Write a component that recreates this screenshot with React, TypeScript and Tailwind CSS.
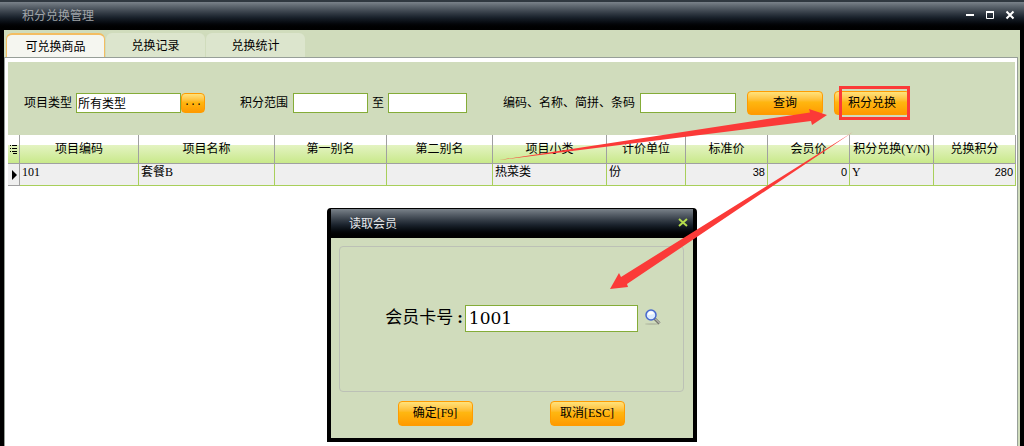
import type { ReactNode } from 'react'

const tabs = ['可兑换商品', '兑换记录', '兑换统计']

const columns = [
  { title: '项目编码', width: 'w-[119px]', value: '101' },
  { title: '项目名称', width: 'w-[136px]', value: '套餐B' },
  { title: '第一别名', width: 'w-[112px]', value: '' },
  { title: '第二别名', width: 'w-[106px]', value: '' },
  { title: '项目小类', width: 'w-[114px]', value: '热菜类' },
  { title: '计价单位', width: 'w-[79px]', value: '份' },
  { title: '标准价', width: 'w-[82px]', value: '38', numeric: true },
  { title: '会员价', width: 'w-[82px]', value: '0', numeric: true },
  { title: '积分兑换(Y/N)', width: 'w-[84px]', value: 'Y' },
  { title: '兑换积分', width: 'w-[82px]', value: '280', numeric: true }
]

const titleBar = 'flex items-center bg-linear-to-b from-[#7a828a] via-[#1a222c] via-55% to-black'
const field = 'h-5 border border-[#84ac38] bg-white px-px outline-none'
const headCell = 'border-r border-b border-[#a0a0a0] bg-linear-to-b from-white from-[10px] via-[#e4f3c2] via-[10px] to-[#c9e98a] p-0'

function OrangeButton({ children, className, label }: { children: ReactNode; className: string; label?: string }) {
  return (
    <button
      type="button"
      aria-label={label}
      className={`rounded border border-[#ff9c00] bg-linear-to-b from-[#ffe27a] via-[#ffb710] via-45% to-[#ff9a00] text-center leading-none ${className}`}
    >
      {children}
    </button>
  )
}

function WindowButtons() {
  return (
    <div className="ml-auto flex items-center gap-2 pr-2 pb-1 text-white">
      <button type="button" aria-label="最小化">
        <svg className="size-3" viewBox="0 0 12 12" stroke="currentColor" strokeWidth="2">
          <path d="M2 7h8" />
        </svg>
      </button>
      <button type="button" aria-label="最大化">
        <svg className="size-3" viewBox="0 0 12 12" fill="none" stroke="currentColor">
          <path d="M2.5 3v7.5h7V3" />
          <path d="M2 4h8" strokeWidth="2" />
        </svg>
      </button>
      <button type="button" aria-label="关闭">
        <svg className="size-3" viewBox="0 0 12 12" stroke="currentColor" strokeWidth="2">
          <path d="M2.5 3.5l7 7m0-7l-7 7" />
        </svg>
      </button>
    </div>
  )
}

function FilterBar() {
  return (
    <form className="flex h-[73px] items-center bg-[#d0dcbc] pt-[9px] pl-4">
      <label htmlFor="type">项目类型</label>
      <input id="type" defaultValue="所有类型" className={`${field} ml-1 w-[105px]`} />
      <OrangeButton className="flex h-5 w-6 items-center justify-center" label="选择类型">
        <span className="font-['Liberation_Mono',monospace] text-[10px]">...</span>
      </OrangeButton>
      <label htmlFor="min" className="ml-[35px]">积分范围</label>
      <input id="min" className={`${field} ml-[5px] w-[75px]`} />
      <label htmlFor="max" className="ml-1">至</label>
      <input id="max" className={`${field} ml-1 w-[79px]`} />
      <label htmlFor="keyword" className="ml-9">编码、名称、简拼、条码</label>
      <input id="keyword" className={`${field} ml-[5px] w-24`} />
      <OrangeButton className="ml-[11px] h-6 w-[76px]">查询</OrangeButton>
      <OrangeButton className="ml-[11px] h-6 w-[76px]">积分兑换</OrangeButton>
    </form>
  )
}

function GoodsTable() {
  return (
    <table className="w-full table-fixed border-separate border-spacing-0">
      <thead>
        <tr className="h-[29px]">
          <th className={`w-3 ${headCell}`} aria-label="选择">
            <svg className="mx-auto h-3 w-2" viewBox="0 0 8 12" stroke="#000">
              <path d="M0 2.5h1m1 0h5M0 5.5h1m1 0h5M0 8.5h1m1 0h5M3 10.5h4" />
            </svg>
          </th>
          {columns.map((col) => (
            <th key={col.title} className={`${col.width} ${headCell} font-normal whitespace-nowrap`}>
              {col.title}
            </th>
          ))}
        </tr>
      </thead>
      <tbody>
        <tr className="h-[22px] bg-[#efefef] align-top leading-4">
          <td className="border-r border-b border-[#a0a0a0] p-0 pt-1">
            <svg className="ml-1 h-3 w-2" viewBox="0 0 8 12">
              <path d="M0 2l5 5-5 5z" />
            </svg>
          </td>
          {columns.map((col) => (
            <td
              key={col.title}
              className={`border-r border-b border-[#a8cf5a] p-0 px-0.5 ${col.numeric ? "text-right font-['Liberation_Sans',sans-serif] text-[11px]" : ''}`}
            >
              {col.value}
            </td>
          ))}
        </tr>
      </tbody>
    </table>
  )
}

function MagnifierIcon() {
  return (
    <svg className="h-5 w-[18px]" viewBox="0 0 18 20">
      <ellipse cx="8" cy="16" rx="7" ry="1" fill="#b9c2a8" />
      <path d="M10.5 10.5l5 5" stroke="#77796f" strokeWidth="3" />
      <path d="M11 10.5l5 5" stroke="#d8d8d0" />
      <circle cx="7" cy="7" r="5" fill="#dcecff" stroke="#4668cf" strokeWidth="1.5" />
      <path d="M4 7a3 3 0 0 1 6-1z" fill="#fff" />
    </svg>
  )
}

function MemberDialog() {
  return (
    <div role="dialog" aria-label="读取会员" className="absolute top-[208px] left-[327px] w-[370px] rounded-t-sm border-4 border-t border-black bg-[#d0dcbc]">
      <div className={`${titleBar} h-[29px] pl-[18px] text-[#e6e8ea]`}>
        <span>读取会员</span>
        <button type="button" aria-label="关闭" className="ml-auto pr-1 pb-0.5 text-[#b5dc4c]">
          <svg className="size-3" viewBox="0 0 12 12" stroke="currentColor" strokeWidth="2">
            <path d="M2 2l8 7m0-7l-8 7" />
          </svg>
        </button>
      </div>
      <div className="mr-[9px] ml-2 mt-2 flex h-[146px] items-center justify-center rounded border border-[#bcc1b6] pb-0.5">
        <label htmlFor="card" className="pl-6 text-[17px]">会员卡号<b className="pr-0.5 pl-1">:</b></label>
        <input id="card" defaultValue="1001" className="h-[27px] w-[173px] border border-[#84ac38] bg-white px-[3px] font-['DejaVu_Serif',serif] text-[17px] outline-none" />
        <button type="button" aria-label="查找" className="ml-1.5">
          <MagnifierIcon />
        </button>
      </div>
      <div className="flex justify-center gap-[77px] pt-[9px] pr-0.5 pb-3">
        <OrangeButton className="h-[25px] w-[75px] pb-0.5">确定[F9]</OrangeButton>
        <OrangeButton className="h-[25px] w-[75px] pb-0.5">取消[ESC]</OrangeButton>
      </div>
    </div>
  )
}

function Annotations() {
  return (
    <svg className="pointer-events-none absolute top-0 left-0" width="1024" height="446" viewBox="0 0 1024 446" fill="#fb3a38">
      <rect x="840.5" y="87.5" width="68" height="31" fill="none" stroke="#fb3a38" strokeWidth="3" />
      <path d="M499 160L810 112.5 809 109 827 115 812 125 811 121z" />
      <path d="M853 132L621 277 619 273 610 289 628 287 627 284z" />
    </svg>
  )
}

export default function App() {
  return (
    <div className="relative flex min-h-screen flex-col bg-black font-['Liberation_Serif','Noto_Sans_CJK_SC',serif] text-xs text-black">
      <header className={`${titleBar} h-[30px] border-t-2 border-[#303840] pl-[22px] text-[#a0a4a8]`}>
        <h1>积分兑换管理</h1>
        <WindowButtons />
      </header>
      <div className="mx-1 flex grow flex-col bg-[#d0dcbc]">
        <nav className="flex h-[27px] items-end gap-px pl-0.5">
          {tabs.map((tab, i) => (
            <button
              key={tab}
              type="button"
              className={`h-6 w-[99px] rounded-t-md pt-0.5 ${i === 0 ? 'border border-t-2 border-b-0 border-[#f3bd62] bg-[#f5f6f0]' : 'bg-[#dce5cd]'}`}
            >
              {tab}
            </button>
          ))}
        </nav>
        <main className="mr-0.5 grow border border-b-0 border-[#979f98] bg-white pt-1 pr-0.5 pl-[3px]">
          <FilterBar />
          <GoodsTable />
        </main>
      </div>
      <MemberDialog />
      <Annotations />
    </div>
  )
}
